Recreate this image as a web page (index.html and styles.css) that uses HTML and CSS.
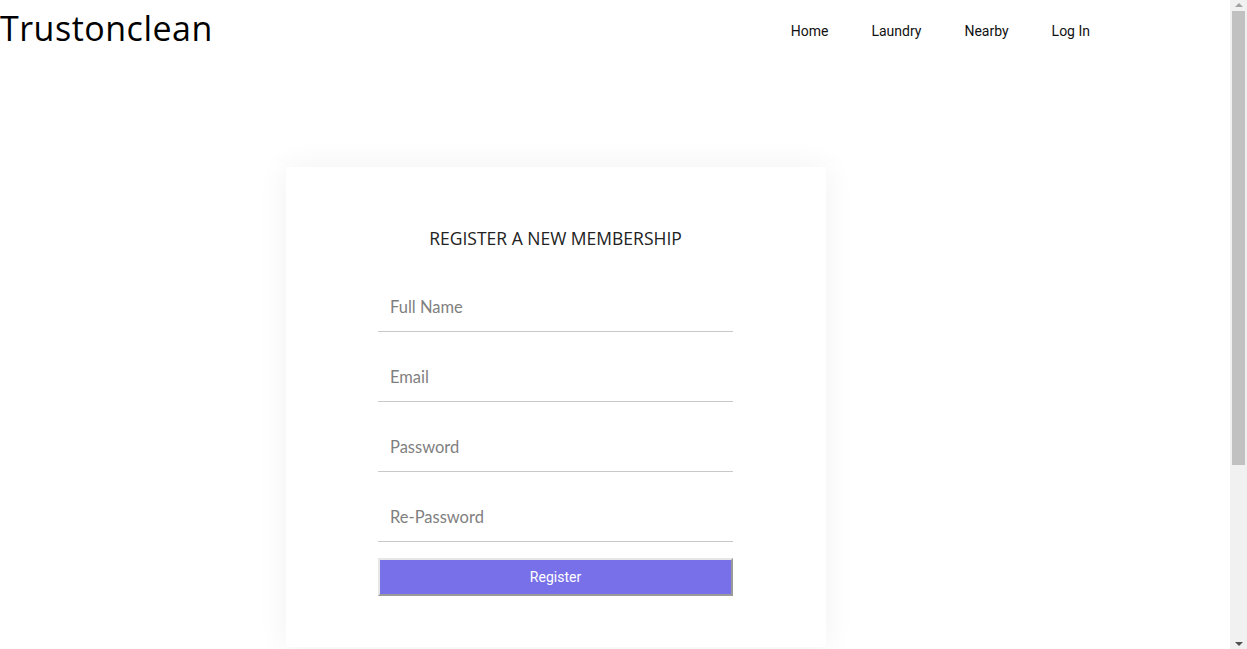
FILE: index.html
```html
<!DOCTYPE html>
<html lang="en">
<head>
<meta charset="utf-8">
<title>Trustonclean - Register</title>
<link rel="stylesheet" href="styles.css">
</head>
<body>
<div class="page">
  <header class="topbar">
    <div class="logo">Trustonclean</div>
    <nav class="nav">
      <a href="#">Home</a>
      <a href="#">Laundry</a>
      <a href="#">Nearby</a>
      <a href="#">Log In</a>
    </nav>
  </header>
  <main class="main">
    <section class="card">
      <h2 class="title">REGISTER A NEW MEMBERSHIP</h2>
      <form class="form">
        <input class="field" type="text" placeholder="Full Name">
        <input class="field" type="email" placeholder="Email">
        <input class="field" type="password" placeholder="Password">
        <input class="field" type="password" placeholder="Re-Password">
        <button class="btn" type="button">Register</button>
      </form>
    </section>
  </main>
</div>
<div class="scrollbar" aria-hidden="true">
  <div class="sb-btn sb-up"><span class="arrow-up"></span></div>
  <div class="sb-track"><div class="sb-thumb"></div></div>
  <div class="sb-btn sb-down"><span class="arrow-down"></span></div>
</div>
</body>
</html>
```
FILE: styles.css
```css
* { box-sizing: border-box; }
html, body { margin: 0; padding: 0; background: #fff; overflow: hidden; }
body { font-family: Roboto, "Liberation Sans", sans-serif; }
.page { margin-right: 17px; height: 649px; }
.topbar {
  display: flex;
  align-items: center;
  justify-content: space-between;
  height: 60px;
  padding-right: 140px;
}
.logo {
  font-family: "Open Sans", "Noto Sans", sans-serif;
  font-size: 34px;
  font-weight: 400;
  color: #000;
  letter-spacing: 0.5px;
  margin-top: -4px;
}
.nav { display: flex; gap: 43px; margin-top: 2px; }
.nav a {
  color: #111;
  text-decoration: none;
  font-size: 14px;
}
.main {
  display: flex;
  padding-top: 107px;
  padding-left: 286px;
}
.card {
  width: 540px;
  height: 480px;
  background: #fff;
  box-shadow: 0 0 30px rgba(0,0,0,0.06);
  padding: 58px 93px 0 92px;
}
.title {
  margin: 0;
  text-align: center;
  font-family: "Open Sans", "Noto Sans", sans-serif;
  font-weight: 400;
  font-size: 17.5px;
  line-height: 26px;
  color: #222;
}
.form {
  display: flex;
  flex-direction: column;
  gap: 20px;
  margin-top: 31px;
}
.field {
  height: 50px;
  border: 0;
  border-bottom: 1px solid #c9c9c9;
  padding: 0 12px;
  font-family: Lato, "Noto Sans", sans-serif;
  font-size: 16.5px;
  color: #333;
  outline: none;
  background: transparent;
}
.field::placeholder { color: #7f7f7f; }
.btn {
  margin-top: -4px;
  height: 38px;
  background: #7770e8;
  color: #fff;
  font-family: Roboto, "Liberation Sans", sans-serif;
  font-size: 14px;
  border: 2px solid;
  border-color: #e6e6e6 #9a9a9a #9a9a9a #e6e6e6;
}
.scrollbar {
  position: fixed;
  top: 0;
  right: 0;
  width: 17px;
  height: 100%;
  background: #f1f1f1;
  display: flex;
  flex-direction: column;
}
.sb-btn {
  height: 10px;
  display: flex;
  align-items: center;
  justify-content: center;
}
.sb-track { flex: 1; padding: 1px 2px 0 2px; }
.sb-thumb { height: 454px; background: #c1c1c1; }
.arrow-up {
  width: 0; height: 0;
  border-left: 4px solid transparent;
  border-right: 4px solid transparent;
  border-bottom: 4px solid #a3a3a3;
}
.arrow-down {
  width: 0; height: 0;
  border-left: 4px solid transparent;
  border-right: 4px solid transparent;
  border-top: 4px solid #505050;
}
```
